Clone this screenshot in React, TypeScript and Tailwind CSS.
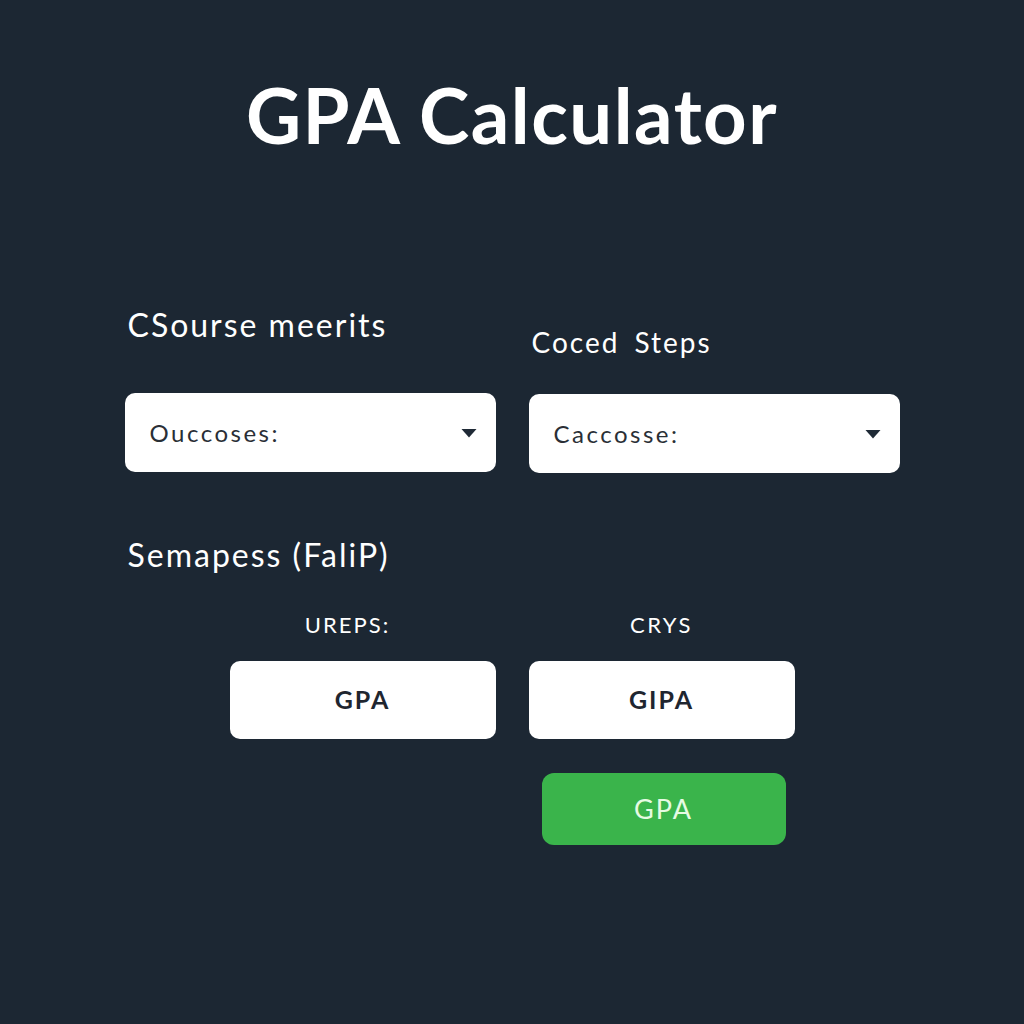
import { ReactNode } from "react";

function Caret() {
  return (
    <svg width="16" height="10" viewBox="0 0 16 10" className="shrink-0">
      <path d="M0.5 1h15L8 9.5z" fill="#1f2a36" />
    </svg>
  );
}

function Select({ value }: { value: string }) {
  return (
    <div className="flex h-[79px] items-center justify-between rounded-[10px] bg-white pl-[25px] pr-[19px]">
      <span className="text-[24px] tracking-[2.5px] text-[#2a2f36]">{value}</span>
      <Caret />
    </div>
  );
}

function Tile({ children }: { children: ReactNode }) {
  return (
    <div className="flex h-[78px] w-[266px] items-center justify-center rounded-[10px] bg-white text-[25px] font-bold tracking-[2px] text-[#1f2630]">
      {children}
    </div>
  );
}

export default function App() {
  return (
    <div
      className="flex min-h-[1024px] w-full flex-col bg-[#1c2733] text-white"
      style={{ fontFamily: "Lato, 'Open Sans', sans-serif" }}
    >
      <h1 className="mt-[77px] text-center text-[76px] font-bold leading-none tracking-[1.5px]">
        GPA Calculator
      </h1>

      <div className="mx-auto mt-[152px] grid w-[775px] grid-cols-2 gap-x-[33px]">
        <div className="flex flex-col">
          <span className="pl-[3px] text-[32px] leading-[40px] tracking-[2px]">CSourse meerits</span>
          <div className="mt-[48px]">
            <Select value="Ouccoses:" />
          </div>
        </div>
        <div className="flex flex-col">
          <span className="mt-[17px] pl-[3px] text-[28px] leading-[40px] tracking-[2px] [word-spacing:6px]">
            Coced Steps
          </span>
          <div className="mt-[32px]">
            <Select value="Caccosse:" />
          </div>
        </div>
      </div>

      <div className="mx-auto mt-[62px] w-[775px]">
        <span className="pl-[3px] text-[32px] leading-[40px] tracking-[2px]">Semapess (FaliP)</span>
      </div>

      <div className="mx-auto mt-[35px] grid w-[775px] grid-cols-2 gap-x-[33px]">
        <div className="flex flex-col items-end">
          <div className="flex w-[266px] justify-center pr-[30px] text-[22px] leading-[30px] tracking-[2px]">
            UREPS:
          </div>
          <div className="mt-[21px]">
            <Tile>GPA</Tile>
          </div>
        </div>
        <div className="flex flex-col items-start">
          <div className="flex w-[266px] justify-center text-[22px] leading-[30px] tracking-[2.5px]">CRYS</div>
          <div className="mt-[21px]">
            <Tile>GIPA</Tile>
          </div>
          <button className="ml-[13px] mt-[34px] flex h-[72px] w-[244px] items-center justify-center rounded-[12px] bg-[#3ab44b] text-[27px] tracking-[2px] text-[#e6fbe3]">
            GPA
          </button>
        </div>
      </div>
    </div>
  );
}
